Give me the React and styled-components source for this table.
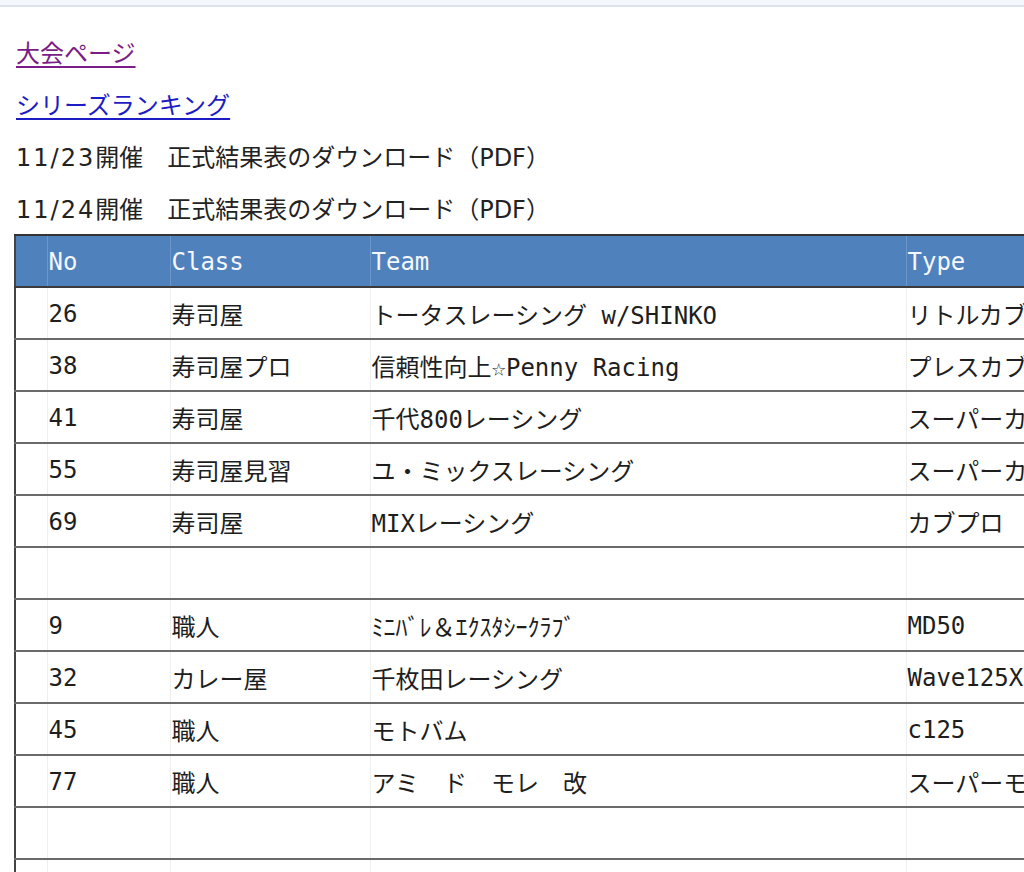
import React from 'react';
import styled, { createGlobalStyle } from 'styled-components';

const GlobalStyle = createGlobalStyle`
  html, body {
    margin: 0;
    padding: 0;
    overflow: hidden;
    background: #ffffff;
  }
  body {
    font-family: "DejaVu Sans", "Noto Sans CJK JP", sans-serif;
    color: #222222;
  }
`;

const TopBar = styled.div`
  height: 5px;
  background-color: #f3f7fb;
  border-bottom: 2px solid #dde3e8;
`;

const Page = styled.div`
  padding: 19px 0 0 14px;
`;

const Line = styled.div`
  height: 52px;
  line-height: 56px;
  padding-left: 2px;
  font-size: 24px;
  white-space: nowrap;
`;

const DateText = styled.span`
  letter-spacing: 2px;
`;

const PageLink = styled.a`
  color: ${props => (props.visited ? '#7a1d86' : '#1c1cc4')};
  text-decoration: underline;
  text-decoration-thickness: 2px;
  text-underline-offset: 4px;
`;

const Table = styled.table`
  width: 1250px;
  border-collapse: collapse;
  border-left: 2px solid #444444;
  border-top: 2px solid #333333;
  font-family: "DejaVu Sans Mono", "Noto Sans CJK JP", monospace;
  font-size: 24px;
  white-space: nowrap;
  table-layout: fixed;
`;

const HeadCell = styled.th`
  box-sizing: border-box;
  height: 52px;
  padding: 2px 3px 0 1px;
  text-align: left;
  font-weight: normal;
  color: #f4f7fb;
  background-color: #4f81bd;
  border-left: 1px solid #6d97cb;
  border-bottom: 2px solid #3a3a3a;
  width: ${props => props.w}px;
`;

const Cell = styled.td`
  box-sizing: border-box;
  height: 52px;
  padding: 1px 3px 0 1px;
  color: #1e1e1e;
  border-left: 1px solid #eeeeee;
  border-bottom: 2px solid #6a6a6a;
  overflow: hidden;
`;

const columns = [
  { key: 'blank', label: '', w: 32 },
  { key: 'no', label: 'No', w: 123 },
  { key: 'class', label: 'Class', w: 200 },
  { key: 'team', label: 'Team', w: 536 },
  { key: 'type', label: 'Type', w: 359 },
];

const rows = [
  ['26', '寿司屋', 'トータスレーシング w/SHINKO', 'リトルカブ'],
  ['38', '寿司屋プロ', '信頼性向上☆Penny Racing', 'プレスカブ'],
  ['41', '寿司屋', '千代800レーシング', 'スーパーカブ'],
  ['55', '寿司屋見習', 'ユ・ミックスレーシング', 'スーパーカブ'],
  ['69', '寿司屋', 'MIXレーシング', 'カブプロ'],
  null,
  ['9', '職人', 'ﾐﾆﾊﾞﾚ＆ｴｸｽﾀｼｰｸﾗﾌﾞ', 'MD50'],
  ['32', 'カレー屋', '千枚田レーシング', 'Wave125X'],
  ['45', '職人', 'モトバム', 'c125'],
  ['77', '職人', 'アミ　ド　モレ　改', 'スーパーモンキー'],
  null,
  null,
];

const App = () => (
  <>
    <GlobalStyle />
    <TopBar />
    <Page>
      <Line>
        <PageLink href="#" visited>大会ページ</PageLink>
      </Line>
      <Line>
        <PageLink href="#">シリーズランキング</PageLink>
      </Line>
      <Line><DateText>11/23</DateText>開催　正式結果表のダウンロード（PDF）</Line>
      <Line><DateText>11/24</DateText>開催　正式結果表のダウンロード（PDF）</Line>
      <Table>
        <thead>
          <tr>
            {columns.map(c => (
              <HeadCell key={c.key} w={c.w}>{c.label}</HeadCell>
            ))}
          </tr>
        </thead>
        <tbody>
          {rows.map((r, i) => (
            <tr key={i}>
              <Cell />
              <Cell>{r ? r[0] : ''}</Cell>
              <Cell>{r ? r[1] : ''}</Cell>
              <Cell>{r ? r[2] : ''}</Cell>
              <Cell>{r ? r[3] : ''}</Cell>
            </tr>
          ))}
        </tbody>
      </Table>
    </Page>
  </>
);

export default App;
